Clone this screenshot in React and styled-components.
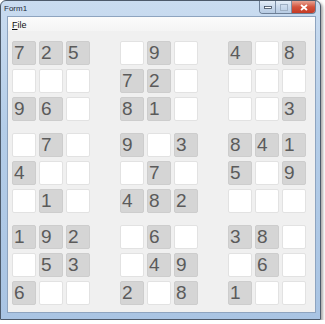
import styled, { createGlobalStyle } from "styled-components";

const GlobalStyle = createGlobalStyle`
  body {
    margin: 0;
    background: #ffffff;
    font-family: "Liberation Sans", Arial, sans-serif;
  }
`;

const Window = styled.div`
  box-sizing: border-box;
  width: 321px;
  height: 320px;
  display: flex;
  flex-direction: column;
  padding: 0 4px 6px 6px;
  border: 1px solid #4d5a6a;
  border-radius: 6px 6px 0 0;
  background: linear-gradient(180deg, #cadcf0 0%, #b4cde8 40%, #a9c4e3 100%);
  box-shadow: 2px 2px 3px rgba(0, 0, 0, 0.35);
`;

const TitleBar = styled.div`
  height: 15px;
  display: flex;
  align-items: flex-start;
`;

const Title = styled.span`
  margin: 3px 0 0 -3px;
  font-size: 8px;
  color: #1e2a38;
`;

const Controls = styled.div`
  margin-left: auto;
  display: flex;
  border: 1px solid #6d7f96;
  border-top: none;
  border-radius: 0 0 4px 4px;
  overflow: hidden;
`;

const ControlButton = styled.div`
  width: ${(p) => (p.$close ? 23 : 15)}px;
  height: 12px;
  display: flex;
  align-items: center;
  justify-content: center;
  background: ${(p) =>
    p.$close
      ? "linear-gradient(180deg, #e8a493 0%, #d3533c 50%, #c43a25 100%)"
      : "linear-gradient(180deg, #e4edf7 0%, #c9d9ec 50%, #b7cbe3 100%)"};
  border-left: ${(p) => (p.$first ? "none" : "1px solid #7d8fa6")};
`;

const Client = styled.div`
  flex: 1;
  display: flex;
  flex-direction: column;
  border: 1px solid #8ea4bf;
  background: #f0f0f0;
`;

const MenuBar = styled.div`
  height: 14px;
  display: flex;
  align-items: center;
  padding-left: 4px;
  background: linear-gradient(180deg, #fbfbfb 0%, #f4f4f4 100%);
`;

const MenuItem = styled.span`
  font-size: 9px;
  color: #111;
  margin-top: 1px;
`;

const Board = styled.div`
  display: grid;
  grid-template-columns: repeat(3, max-content);
  column-gap: 30px;
  row-gap: 12px;
  padding: 10px 0 0 4px;
`;

const Block = styled.div`
  display: grid;
  grid-template-columns: repeat(3, 24px);
  grid-auto-rows: 24px;
  column-gap: 3px;
  row-gap: 4px;
`;

const Cell = styled.div`
  box-sizing: border-box;
  border: 1px solid ${(p) => (p.$given ? "#cdcdcd" : "#e2e2e2")};
  border-radius: 2px;
  background: ${(p) => (p.$given ? "#d5d5d5" : "#ffffff")};
  color: #5b5b5b;
  font-size: 19px;
  line-height: 22px;
  padding-left: 1px;
`;

const blocks = [
  "725   96 ",
  " 9 72 81 ",
  "4 8     3",
  " 7 4   1 ",
  "9 3 7 482",
  "8415 9   ",
  "192 536  ",
  " 6  492 8",
  "38  6 1  ",
];

export default function App() {
  return (
    <>
      <GlobalStyle />
      <Window>
        <TitleBar>
          <Title>Form1</Title>
          <Controls>
            <ControlButton $first>
              <svg width="8" height="3" viewBox="0 0 8 3">
                <rect x="0.5" y="0.5" width="7" height="2" fill="#fff" stroke="#3c4a5c" strokeWidth="0.8" />
              </svg>
            </ControlButton>
            <ControlButton>
              <svg width="8" height="7" viewBox="0 0 8 7">
                <rect x="0.5" y="0.5" width="7" height="6" fill="none" stroke="#9fb0c4" strokeWidth="1" />
              </svg>
            </ControlButton>
            <ControlButton $close>
              <svg width="8" height="7" viewBox="0 0 8 7">
                <path d="M1 1 L7 6 M7 1 L1 6" stroke="#fff" strokeWidth="1.8" />
              </svg>
            </ControlButton>
          </Controls>
        </TitleBar>
        <Client>
          <MenuBar>
            <MenuItem>
              <u>F</u>ile
            </MenuItem>
          </MenuBar>
          <Board>
            {blocks.map((b, i) => (
              <Block key={i}>
                {b.split("").map((ch, j) => (
                  <Cell key={j} $given={ch !== " "}>
                    {ch.trim()}
                  </Cell>
                ))}
              </Block>
            ))}
          </Board>
        </Client>
      </Window>
    </>
  );
}
